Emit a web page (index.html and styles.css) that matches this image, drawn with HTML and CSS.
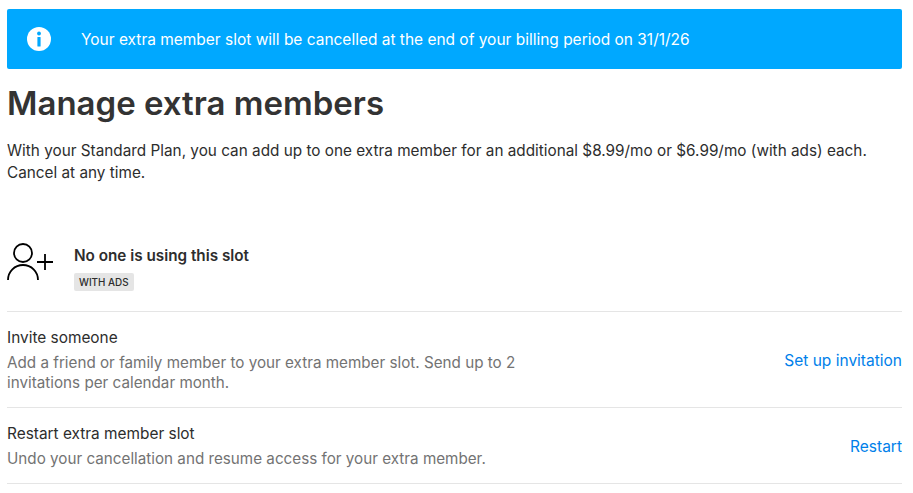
FILE: index.html
```html
<!DOCTYPE html>
<html lang="en">
<head>
    <meta charset="UTF-8">
    <title>Manage extra members</title>
    <link rel="stylesheet" href="styles.css">
</head>
<body>
    <div class="banner">
        <svg class="banner-icon" width="24" height="24" viewBox="0 0 24 24">
            <circle cx="12" cy="12" r="12" fill="#fff"/>
            <circle cx="12" cy="6.500" r="1.900" fill="#00a8ff"/>
            <rect x="10.400" y="10" width="3.200" height="9.500" rx="0.600" fill="#00a8ff"/>
        </svg>
        <span>Your extra member slot will be cancelled at the end of your billing period on 31/1/26</span>
    </div>

    <h1>Manage extra members</h1>
    <p class="intro">With your Standard Plan, you can add up to one extra member for an additional $8.99/mo or $6.99/mo (with ads) each. Cancel at any time.</p>

    <div class="slot">
        <svg class="slot-icon" width="46" height="38" viewBox="0 0 46 38" fill="none" stroke="#000" stroke-width="1.800">
            <circle cx="16" cy="10" r="9"/>
            <path d="M1 37a15 15 0 0 1 30 0"/>
            <path d="M30 19h16M38 11v16"/>
        </svg>
        <div>
            <div class="slot-title">No one is using this slot</div>
            <span class="badge">WITH ADS</span>
        </div>
    </div>

    <div class="row row-invite">
        <div class="row-text">
            <div class="row-title">Invite someone</div>
            <div class="row-desc">Add a friend or family member to your extra member slot. Send up to 2 invitations per calendar month.</div>
        </div>
        <a class="row-link" href="#">Set up invitation</a>
    </div>

    <div class="row row-restart">
        <div class="row-text">
            <div class="row-title">Restart extra member slot</div>
            <div class="row-desc">Undo your cancellation and resume access for your extra member.</div>
        </div>
        <a class="row-link" href="#">Restart</a>
    </div>
</body>
</html>
```

FILE: styles.css
```css
body {
    font-family: Inter, "Noto Sans", sans-serif;
    font-size: 16px;
    color: #2d2d2d;
    background-color: #fff;
    margin: 9px 11px 0 7px;
}

.banner {
    display: flex;
    align-items: center;
    gap: 30px;
    height: 60px;
    padding-left: 20px;
    background-color: #00a8ff;
    border-radius: 2px;
    color: #fff;
    font-size: 15.470px;
}

h1 {
    font-size: 33px;
    font-weight: 600;
    line-height: 42px;
    margin: 13px 0 0;
    color: #333;
}

.intro {
    line-height: 22px;
    margin: 16px 0 0;
    font-size: 15.320px;
}

.slot {
    display: flex;
    align-items: flex-start;
    gap: 21px;
    margin-top: 59px;
    padding-bottom: 20px;
    border-bottom: 1px solid #e5e5e5;
}

.slot-title {
    font-weight: 600;
    line-height: 22px;
    font-size: 15.270px;
    margin-top: 2px;
}

.badge {
    display: inline-block;
    margin-top: 6px;
    padding: 0 5px;
    height: 18px;
    line-height: 18px;
    font-size: 9.900px;
    font-weight: 500;
    background-color: #e5e5e5;
    border-radius: 2px;
}

.row {
    display: flex;
    justify-content: space-between;
    align-items: center;
    border-bottom: 1px solid #e5e5e5;
    font-size: 15.400px;
}

.row-invite {
    height: 95px;
}

.row-restart {
    height: 75px;
}

.row-text {
    max-width: 540px;
}

.row-title {
    line-height: 22px;
    margin-bottom: 4px;
}

.row-desc {
    line-height: 20px;
    font-size: 15.220px;
    color: #737373;
}

.row-link {
    color: #0080ea;
    font-size: 15.500px;
    padding-top: 2px;
    text-decoration: none;
}
```
